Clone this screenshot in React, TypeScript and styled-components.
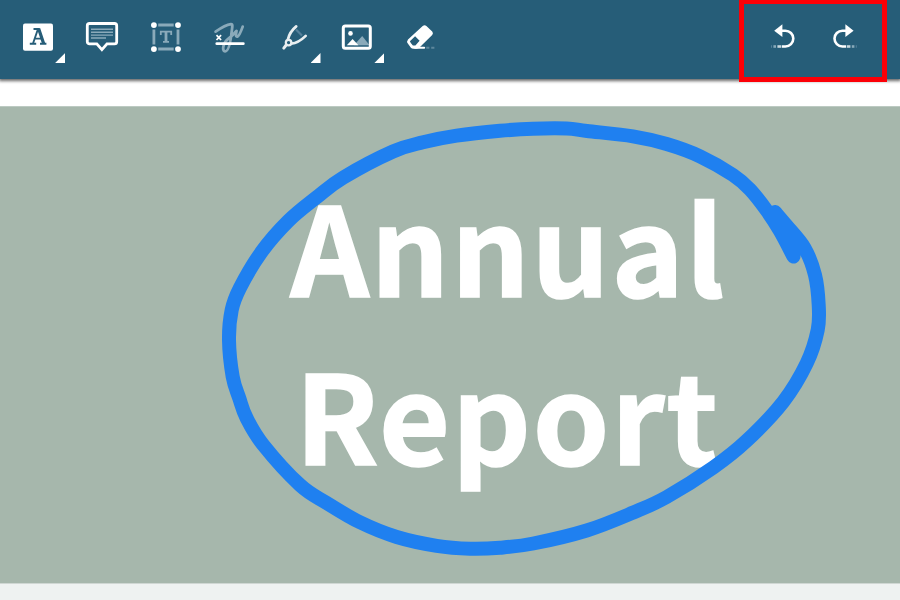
import React from "react";
import styled, { createGlobalStyle } from "styled-components";

const GlobalStyle = createGlobalStyle`
  body { margin: 0; background: #eef2f1; overflow: hidden; }
`;

const Viewer = styled.div`
  display: flex;
  flex-direction: column;
  width: 900px;
  height: 600px;
  background: #eef2f1;
`;

const Toolbar = styled.header`
  position: relative;
  z-index: 1;
  display: flex;
  justify-content: space-between;
  height: 79px;
  padding: 0 26px 0 6.3px;
  box-sizing: border-box;
  background: #265d78;
  box-shadow: 0 1px 3px 1px rgba(0, 0, 0, 0.6);
`;

const Group = styled.div`
  position: relative;
  display: flex;
`;

const ToolButton = styled.button<{ $width: number }>`
  position: relative;
  width: ${(p) => p.$width}px;
  height: 74px;
  padding: 0;
  border: 0;
  background: transparent;
  color: #fff;
  svg { display: block; margin: 0 auto; overflow: visible; }
`;

const MenuCorner = styled.span`
  position: absolute;
  right: 5px;
  bottom: 11px;
  width: 10px;
  height: 10px;
  background: #fff;
  clip-path: polygon(100% 0, 100% 100%, 0 100%);
`;

const Highlight = styled.div`
  position: absolute;
  inset: 0 -13px -2.5px -15px;
  border: 5px solid #fc0007;
  border-top-width: 4px;
  pointer-events: none;
`;

const Canvas = styled.main`
  padding-top: 27px;
  background: #fff;
`;

const Sheet = styled.section`
  position: relative;
  height: 476px;
  background: #a6b7ac;
  border-top: 1px solid #bccac2;
  border-bottom: 1px solid #cfd7d3;
`;

const Title = styled.h1`
  margin: 0;
  padding: 52.7px 0 0 290.5px;
  color: #fff;
  font: 700 122.4px/168.2px "Noto Sans CJK SC", "Noto Sans", sans-serif;
  letter-spacing: 1.9px;
  -webkit-text-stroke: 1.7px #fff;
`;

const TitleLine = styled.span<{ $indent?: number }>`
  display: block;
  padding-left: ${(p) => p.$indent ?? 0}px;
  white-space: nowrap;
`;

const Ink = styled.svg`
  position: absolute;
  left: 0;
  top: 0;
`;

const faint = "#8aaaba";

const icons: Record<string, React.ReactNode> = {
  text: (
    <>
      <rect x="5" y="4.5" width="30" height="27.2" rx="2" fill="currentColor" />
      <path d="M15.5 10h6M20 10l-5 14.5M16.7 19.6h8.3M11.8 24.8h6.4M22 24.8h6.4" stroke="#265d78" strokeWidth="1.9" />
      <path d="M20.6 9.6l5 15" stroke="#265d78" strokeWidth="3.2" />
    </>
  ),
  comment: (
    <>
      <path d="M7.5 4.5h25a2.2 2.2 0 0 1 2.2 2.2v16a2.2 2.2 0 0 1-2.2 2.2H25l-5.1 5.8-5.1-5.8H7.5a2.2 2.2 0 0 1-2.2-2.2v-16A2.2 2.2 0 0 1 7.5 4.5z" stroke="currentColor" strokeWidth="2.8" />
      <path d="M9 10.3h22M9 13.2h22M9 16.1h22M9 19h15" stroke={faint} strokeWidth="1.4" />
    </>
  ),
  textbox: (
    <>
      <path d="M12.2 6h15.5M12.2 30h15.5M7.9 10.5v15M32 10.5v15" stroke={faint} strokeWidth="2.8" />
      <path d="M14.8 16v-3.3h10.4V16M17 22.8h6" stroke={faint} strokeWidth="1.8" />
      <path d="M20 12.5v10.5" stroke={faint} strokeWidth="2.8" />
      {[[7.9, 6.1], [32, 6.1], [7.9, 30.1], [32, 30.1]].map(([x, y]) => (
        <circle key={`${x}-${y}`} cx={x} cy={y} r="2.9" fill="currentColor" />
      ))}
    </>
  ),
  signature: (
    <>
      <path d="M5.6 12.6c5-3.5 11.5-7 15.3-7.5 2.2-.2 1.3 3.5.8 7.5-.9 8-2.5 20-6.6 19.7-4-.5-1.2-9.5 3-12.5C21.5 17.3 24 15.1 26.2 12.1l.3-.2c-.7 3.5-.8 6.2.9 5.7 1.7-.6 3.7-5.5 5.3-10" stroke={faint} strokeWidth="2.8" strokeLinecap="round" strokeLinejoin="round" />
      <path d="M6.5 16.2l4.6 4.8m0-4.8l-4.6 4.8" stroke="currentColor" strokeWidth="1.7" />
      <path d="M6.8 24.7h26.5" stroke="currentColor" strokeWidth="2.8" strokeLinecap="round" />
    </>
  ),
  marker: (
    <>
      <path d="M22 10.5l6 6" stroke="#54809a" strokeWidth="2.2" />
      <path d="M22.2 7.4C18.5 10.5 15.4 14 13.9 20.5M31.7 16.9C27.5 21 23.5 24.2 17.3 24.7" stroke="#e8eef0" strokeWidth="2.7" strokeLinecap="round" />
      <circle cx="14.6" cy="23.6" r="2.8" stroke="#e8eef0" strokeWidth="2.2" />
      <path d="M12 26.3l-2.2 2.8" stroke="#e8eef0" strokeWidth="3" strokeLinecap="round" />
    </>
  ),
  image: (
    <>
      <path d="M17 26.3l8.2-9.2 7.4 9.2z" fill={faint} />
      <rect x="6.3" y="7.1" width="27" height="22.2" rx="2" stroke="currentColor" strokeWidth="3" />
      <path d="M9.8 26.3l5.8-6.2 5.8 6.2z" fill="currentColor" />
      <circle cx="13.5" cy="14.4" r="2.3" fill="currentColor" />
    </>
  ),
  eraser: (
    <>
      <path d="M7 20.5L21.7 7Q23.6 5.6 25.4 7l5.8 5.4q1.5 1.7 0 3.5L19 28q-1.5 1.7-3.5 1.7h-3.2q-1.5 0-2.4-1L7 24.8q-1.8-2.2 0-4.3z" fill="currentColor" />
      <path d="M8.9 22.2l5.2-5 4.5 4.5-4.2 4.7h-2.5q-2.3-2-3-4.2z" fill="#265d78" />
      <path d="M14 28.7h9.2" stroke="currentColor" strokeWidth="2" strokeLinecap="round" />
      <path d="M25.2 28.7h3.2M30.2 28.7h3.2" stroke="#5d879c" strokeWidth="2" />
    </>
  ),
  undo: (
    <>
      <path d="M12.5 11.7h8.9a7.9 7.9 0 0 1 0 15.8h-3.7" stroke="currentColor" strokeWidth="2.6" />
      <path d="M10.2 11.7l8.2-6.4v12.8z" fill="currentColor" />
      <path d="M13.4 27.5h3.6" stroke="#c8d7de" strokeWidth="2.6" />
      <path d="M9.4 27.5h2.6" stroke="#8aaaba" strokeWidth="2.6" />
      <path d="M7 27.5h1" stroke="#54809a" strokeWidth="2.6" />
    </>
  ),
};

function Icon({ name, flip }: { name: string; flip?: boolean }) {
  return (
    <svg width="40" height="37" viewBox="0 0 40 37" fill="none">
      <g transform={flip ? "translate(39.8 0) scale(-1 1)" : undefined}>{icons[name]}</g>
    </svg>
  );
}

const tools = [
  { name: "text", menu: true },
  { name: "comment" },
  { name: "textbox" },
  { name: "signature" },
  { name: "marker", menu: true },
  { name: "image", menu: true },
  { name: "eraser" },
];

type Point = [number, number];

const strokePoints: Point[] = [
  [793.5, 256.5], [780, 231], [766.7, 210.5], [750, 189.5], [733, 175], [700, 156.3], [666.7, 144], [633, 136.3],
  [587, 131], [566.7, 128.5], [533, 128.7], [500, 130.8], [456.7, 135.7], [423, 142.3], [393, 151.5],
  [343, 177.7], [316.7, 197.3], [288.3, 221], [261.7, 251.7], [240, 287.7], [231.7, 310], [229, 340],
  [232.7, 376.7], [239.3, 398.3], [246.7, 418.3], [263.3, 445], [300, 485], [326.7, 503], [360, 522.3],
  [396.7, 537], [436.7, 545.8], [470, 548.7], [500, 547.7], [533.3, 543.5], [586.7, 530.5], [633.3, 512.5],
  [666.7, 497], [713.3, 467.5], [746.7, 440.7], [783.3, 401.7], [806.7, 363.3], [817.7, 330], [818.7, 305],
  [815, 275], [804.5, 248], [786, 225], [775, 212],
];

/** Smooth curve through every point (Catmull-Rom as cubic segments). */
function smoothPath(pts: Point[]) {
  return pts.slice(0, -1).reduce((d, p, i) => {
    const a = pts[i - 1] ?? p;
    const q = pts[i + 1];
    const b = pts[i + 2] ?? q;
    return `${d}C${p[0] + (q[0] - a[0]) / 6} ${p[1] + (q[1] - a[1]) / 6} ${q[0] - (b[0] - p[0]) / 6} ${q[1] - (b[1] - p[1]) / 6} ${q[0]} ${q[1]}`;
  }, `M${pts[0][0]} ${pts[0][1]}`);
}

export default function App() {
  return (
    <Viewer>
      <GlobalStyle />
      <Toolbar>
        <Group>
          {tools.map((t) => (
            <ToolButton key={t.name} $width={63.85} aria-label={t.name}>
              <Icon name={t.name} />
              {t.menu && <MenuCorner />}
            </ToolButton>
          ))}
        </Group>
        <Group>
          <ToolButton $width={60} aria-label="undo"><Icon name="undo" /></ToolButton>
          <ToolButton $width={60} aria-label="redo"><Icon name="undo" flip /></ToolButton>
          <Highlight />
        </Group>
      </Toolbar>
      <Canvas>
        <Sheet>
          <Title>
            <TitleLine>Annual</TitleLine>
            <TitleLine $indent={4.7}>Report</TitleLine>
          </Title>
          <Ink width="900" height="476" viewBox="0 107 900 476" fill="none">
            <path d={smoothPath(strokePoints)} stroke="#1f80f0" strokeWidth="14" strokeLinecap="round" strokeLinejoin="round" />
          </Ink>
        </Sheet>
      </Canvas>
    </Viewer>
  );
}
